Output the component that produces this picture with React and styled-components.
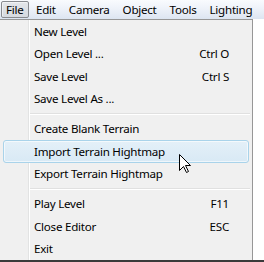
import React from 'react';
import styled, { createGlobalStyle } from 'styled-components';

const Global = createGlobalStyle`
  html, body {
    margin: 0;
    padding: 0;
    background: #fff;
  }
  body {
    font-family: "Segoe UI", "Noto Sans", "Open Sans", sans-serif;
    font-size: 11.6px;
    letter-spacing: -0.25px;
    color: #000;
  }
`;

const Screen = styled.div`
  width: 264px;
  height: 262px;
  position: relative;
  overflow: hidden;
  background: #fff;
  border-bottom: 2px solid #3a3a3a;
  box-sizing: border-box;
`;

const MenuBar = styled.div`
  height: 19px;
  display: flex;
  align-items: center;
  padding-left: 1px;
  background: linear-gradient(#f9fbfe 0%, #eef2f9 45%, #dde5f1 100%);
  white-space: nowrap;
`;

const BarItem = styled.div`
  height: 17px;
  box-sizing: border-box;
  display: flex;
  align-items: center;
  padding: 0 ${p => (p.$open ? 4 : 5.5)}px;
  margin-right: ${p => (p.$open ? 1 : 0)}px;
  line-height: 1;
  border-radius: 2px;
  border: ${p => (p.$open ? '1px solid #878a8f' : '1px solid transparent')};
  background: ${p => (p.$open ? 'linear-gradient(#e3e6ea, #d6dae0)' : 'transparent')};
  box-shadow: ${p => (p.$open ? 'inset 1px 1px 0 rgba(255,255,255,0.5)' : 'none')};
`;

const Dropdown = styled.div`
  width: 253px;
  box-sizing: border-box;
  background: #f0f0f0;
  border-top: 1px solid #979797;
  border-right: 1px solid #979797;
  position: relative;
  padding: 0 2px 0 2px;
`;

const Gutter = styled.div`
  position: absolute;
  left: 28px;
  top: 0;
  bottom: 0;
  width: 1px;
  background: #e2e3e3;
  border-right: 1px solid #fff;
`;

const Item = styled.div`
  position: relative;
  height: 22.5px;
  display: flex;
  align-items: center;
  justify-content: space-between;
  padding: 0 19px 0 30px;
  margin: 0 1px;
  box-sizing: border-box;
  border-radius: 3px;
  border: 1px solid ${p => (p.$hover ? '#a9d3ea' : 'transparent')};
  background: ${p => (p.$hover ? 'linear-gradient(#e4f0f8, #d8e9f5)' : 'transparent')};
  box-shadow: ${p => (p.$hover ? 'inset 0 0 0 1px rgba(255,255,255,0.6)' : 'none')};
`;

const Separator = styled.div`
  height: 7.5px;
  display: flex;
  align-items: center;
  padding-left: 28px;
  &::after {
    content: '';
    flex: 1;
    height: 1px;
    background: #e0e0e0;
    border-bottom: 1px solid #fff;
  }
`;

const Cursor = styled.svg`
  position: absolute;
  left: 179px;
  top: 154px;
`;

const groups = [
  [
    ['New Level'],
    ['Open Level ...', 'Ctrl O'],
    ['Save Level', 'Ctrl S'],
    ['Save Level As ...'],
  ],
  [
    ['Create Blank Terrain'],
    ['Import Terrain Hightmap', null, true],
    ['Export Terrain Hightmap'],
  ],
  [
    ['Play Level', 'F11'],
    ['Close Editor', 'ESC'],
    ['Exit'],
  ],
];

const menus = ['File', 'Edit', 'Camera', 'Object', 'Tools', 'Lighting'];

export default function App() {
  return (
    <Screen>
      <Global />
      <MenuBar>
        {menus.map((m, i) => (
          <BarItem key={m} $open={i === 0}>{m}</BarItem>
        ))}
      </MenuBar>
      <Dropdown>
        <Gutter />
        {groups.map((g, gi) => (
          <React.Fragment key={gi}>
            {gi > 0 && <Separator />}
            {g.map(([label, key, hover]) => (
              <Item key={label} $hover={hover}>
                <span>{label}</span>
                {key && <span>{key}</span>}
              </Item>
            ))}
          </React.Fragment>
        ))}
      </Dropdown>
      <Cursor width="13" height="20" viewBox="0 0 13 20">
        <path
          d="M0.5 0.5 L0.5 16.5 L4.5 12.5 L7.5 18.5 L9.5 17.5 L6.5 11.5 L11.5 11.5 Z"
          fill="#fff"
          stroke="#000"
          strokeWidth="1"
          strokeLinejoin="miter"
        />
      </Cursor>
    </Screen>
  );
}
